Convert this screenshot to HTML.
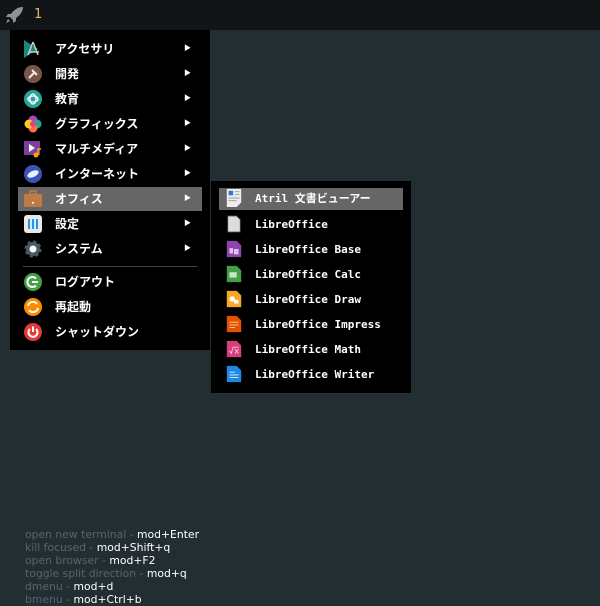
<!DOCTYPE html>
<html><head><meta charset="utf-8"><style>
*{margin:0;padding:0;box-sizing:border-box}
body{width:600px;height:600px;background:#232e33;position:relative;overflow:hidden;font-family:"Liberation Sans","Noto Sans CJK JP",sans-serif}
#bar{position:absolute;left:0;top:0;width:600px;height:30px;background:#111518}
#bar .n{position:absolute;left:34px;top:7px;color:#e8b86a;font:13px "DejaVu Sans",sans-serif}
.menu{position:absolute;background:#000}
.row{position:absolute;height:24px;color:#fff;font-weight:bold;font-size:12px;line-height:24px}
.row .ic{position:absolute;top:3px;width:18px;height:18px}
.row .t{position:absolute;white-space:nowrap}
.row .ar{position:absolute;left:166px;font-size:7px;font-weight:normal}
.sel{background:#666}
#m2 .row{font-family:"DejaVu Sans Mono","Liberation Mono","Noto Sans CJK JP",monospace;font-size:11px}
.help{position:absolute;left:25px;font:10.8px "DejaVu Sans",sans-serif;color:#56656b;white-space:nowrap}
.help b{font-weight:normal;color:#fff}
</style></head><body>
<div id="bar">
<svg style="position:absolute;left:5px;top:6px" width="20" height="18" viewBox="0 0 20 18"><path d="M18 1 C12 1 8 5 6 8 L3 8 L1 11 L5 11 L8 14 L8 17 L11 15 L11 12 C14 10 18 6 18 1Z M3 13 L1 17 L5 15Z" fill="#8a9499"/></svg>
<span class="n">1</span></div>

<div class="menu" id="m1" style="left:10px;top:30px;width:200px;height:320px">
<div class="row" style="left:8px;top:7px;width:184px"><svg class="ic" style="left:6px" viewBox="0 0 18 18"><path d="M0 0L14 9L0 18Z" fill="#1a8a78"/><path d="M9 2L4 15M9 2L14 15M5 12H15" stroke="#ccc" stroke-width="1.5" fill="none"/></svg><span class="t" style="left:37px">アクセサリ</span><span class="ar">▶</span></div>
<div class="row" style="left:8px;top:32px;width:184px"><svg class="ic" style="left:6px" viewBox="0 0 18 18"><circle cx="9" cy="9" r="9" fill="#795548"/><path d="M5 13L11 7M8 5L13 10" stroke="#eee" stroke-width="2"/></svg><span class="t" style="left:37px">開発</span><span class="ar">▶</span></div>
<div class="row" style="left:8px;top:57px;width:184px"><svg class="ic" style="left:6px" viewBox="0 0 18 18"><circle cx="9" cy="9" r="9" fill="#26a69a"/><ellipse cx="9" cy="9" rx="5" ry="3" stroke="#fff" fill="none" stroke-width="1.3"/><ellipse cx="9" cy="9" rx="3" ry="5" stroke="#fff" fill="none" stroke-width="1.3"/></svg><span class="t" style="left:37px">教育</span><span class="ar">▶</span></div>
<div class="row" style="left:8px;top:82px;width:184px"><svg class="ic" style="left:6px" viewBox="0 0 18 18"><circle cx="9" cy="5" r="4.5" fill="#ab47bc"/><circle cx="13" cy="9" r="4.5" fill="#26a69a"/><circle cx="9" cy="13" r="4.5" fill="#ff7043"/><circle cx="5" cy="9" r="4.5" fill="#ffca28"/><circle cx="9" cy="9" r="3" fill="#ec407a"/></svg><span class="t" style="left:37px">グラフィックス</span><span class="ar">▶</span></div>
<div class="row" style="left:8px;top:107px;width:184px"><svg class="ic" style="left:6px" viewBox="0 0 18 18"><rect x="0" y="1" width="16" height="14" fill="#7b3fa0"/><path d="M5 4L11 8L5 12Z" fill="#fff"/><circle cx="12" cy="15" r="2.5" fill="#ffa000"/><path d="M14 15V9h3" stroke="#ffa000" stroke-width="1.5" fill="none"/></svg><span class="t" style="left:37px">マルチメディア</span><span class="ar">▶</span></div>
<div class="row" style="left:8px;top:132px;width:184px"><svg class="ic" style="left:6px" viewBox="0 0 18 18"><circle cx="9" cy="9" r="9" fill="#3f51b5"/><ellipse cx="9" cy="9" rx="6" ry="3" fill="#e3f2fd" transform="rotate(-25 9 9)"/></svg><span class="t" style="left:37px">インターネット</span><span class="ar">▶</span></div>
<div class="row sel" style="left:8px;top:157px;width:184px"><svg class="ic" style="left:6px" viewBox="0 0 18 18"><rect x="0" y="4" width="18" height="13" rx="1" fill="#c07a45"/><rect x="6" y="1" width="6" height="3" fill="none" stroke="#c07a45" stroke-width="1.5"/><rect x="8" y="12" width="2" height="1.5" fill="#fff"/></svg><span class="t" style="left:37px">オフィス</span><span class="ar">▶</span></div>
<div class="row" style="left:8px;top:182px;width:184px"><svg class="ic" style="left:6px" viewBox="0 0 18 18"><rect width="18" height="18" rx="3" fill="#e8e8e8"/><path d="M5 4V14M9 4V14M13 4V14" stroke="#2196f3" stroke-width="2"/></svg><span class="t" style="left:37px">設定</span><span class="ar">▶</span></div>
<div class="row" style="left:8px;top:207px;width:184px"><svg class="ic" style="left:6px" viewBox="0 0 18 18"><circle cx="9" cy="9" r="7" fill="#455a64" stroke="#455a64" stroke-width="3" stroke-dasharray="3 2.5"/><circle cx="9" cy="9" r="3.5" fill="#fff"/></svg><span class="t" style="left:37px">システム</span><span class="ar">▶</span></div>
<div style="position:absolute;left:13px;top:236px;width:174px;height:1px;background:#444"></div>
<div class="row" style="left:8px;top:240px;width:184px"><svg class="ic" style="left:6px" viewBox="0 0 18 18"><circle cx="9" cy="9" r="9" fill="#43a047"/><path d="M12 5.5A5 5 0 1 0 12 12.5" stroke="#fff" stroke-width="2" fill="none"/><path d="M8 9H14" stroke="#fff" stroke-width="2"/></svg><span class="t" style="left:37px">ログアウト</span></div>
<div class="row" style="left:8px;top:265px;width:184px"><svg class="ic" style="left:6px" viewBox="0 0 18 18"><circle cx="9" cy="9" r="9" fill="#fb8c00"/><path d="M4 8A5 5 0 0 1 13 6M14 10A5 5 0 0 1 5 12" stroke="#fff" stroke-width="2" fill="none"/></svg><span class="t" style="left:37px">再起動</span></div>
<div class="row" style="left:8px;top:290px;width:184px"><svg class="ic" style="left:6px" viewBox="0 0 18 18"><circle cx="9" cy="9" r="9" fill="#e53935"/><path d="M6 6A4.5 4.5 0 1 0 12 6" stroke="#fff" stroke-width="2" fill="none"/><path d="M9 3.5V9" stroke="#fff" stroke-width="2"/></svg><span class="t" style="left:37px">シャットダウン</span></div>
</div>

<div class="menu" id="m2" style="left:211px;top:181px;width:200px;height:212px">
<div class="row sel" style="left:8px;top:7px;width:184px;height:22px;line-height:22px"><svg class="ic" style="left:6px;top:1px" viewBox="0 0 18 20"><path d="M1 0H17V15L12 20H1Z" fill="#eee"/><rect x="3" y="2" width="5" height="5" fill="#2a7ad8"/><path d="M10 3H15M10 6H15M3 10H15M3 13H12" stroke="#999"/></svg><span class="t" style="left:36px">Atril 文書ビューアー</span></div>
<div class="row" style="left:8px;top:32px;width:184px"><svg class="ic" style="left:6px;top:2px" viewBox="0 0 16 20"><path d="M1 1H11L15 5V19H1Z" fill="#ddd" stroke="#444"/></svg><span class="t" style="left:36px">LibreOffice</span></div>
<div class="row" style="left:8px;top:57px;width:184px"><svg class="ic" style="left:6px;top:2px" viewBox="0 0 16 20"><path d="M0 1H11L16 6V19H0Z" fill="#8e44ad"/><rect x="3" y="9" width="4" height="6" fill="#e0c0f0"/><rect x="8" y="10" width="5" height="6" fill="#e0c0f0"/></svg><span class="t" style="left:36px">LibreOffice Base</span></div>
<div class="row" style="left:8px;top:82px;width:184px"><svg class="ic" style="left:6px;top:2px" viewBox="0 0 16 20"><path d="M0 1H11L16 6V19H0Z" fill="#43a047"/><rect x="3" y="8" width="8" height="6" fill="#c8e6c9"/></svg><span class="t" style="left:36px">LibreOffice Calc</span></div>
<div class="row" style="left:8px;top:107px;width:184px"><svg class="ic" style="left:6px;top:2px" viewBox="0 0 16 20"><path d="M0 1H11L16 6V19H0Z" fill="#f9a825"/><circle cx="6" cy="10" r="3" fill="#fff"/><rect x="8" y="11" width="5" height="4" fill="#fff"/></svg><span class="t" style="left:36px">LibreOffice Draw</span></div>
<div class="row" style="left:8px;top:132px;width:184px"><svg class="ic" style="left:6px;top:2px" viewBox="0 0 16 20"><path d="M0 1H11L16 6V19H0Z" fill="#e65100"/><path d="M3 8H13M3 11H13M3 14H9" stroke="#ffccaa"/></svg><span class="t" style="left:36px">LibreOffice Impress</span></div>
<div class="row" style="left:8px;top:157px;width:184px"><svg class="ic" style="left:6px;top:2px" viewBox="0 0 16 20"><path d="M0 1H11L16 6V19H0Z" fill="#d63f7d"/><path d="M3 12L5 15L7 8H13M9 10L13 15M13 10L9 15" stroke="#fcd" fill="none"/></svg><span class="t" style="left:36px">LibreOffice Math</span></div>
<div class="row" style="left:8px;top:182px;width:184px"><svg class="ic" style="left:6px;top:2px" viewBox="0 0 16 20"><path d="M0 1H11L16 6V19H0Z" fill="#1e88e5"/><path d="M3 8H9M3 11H13M3 14H13" stroke="#dceeff"/></svg><span class="t" style="left:36px">LibreOffice Writer</span></div>
</div>

<div class="help" style="top:528px">open new terminal - <b>mod+Enter</b></div>
<div class="help" style="top:541px">kill focused - <b>mod+Shift+q</b></div>
<div class="help" style="top:554px">open browser - <b>mod+F2</b></div>
<div class="help" style="top:567px">toggle split direction - <b>mod+q</b></div>
<div class="help" style="top:580px">dmenu - <b>mod+d</b></div>
<div class="help" style="top:593px">bmenu - <b>mod+Ctrl+b</b></div>
</body></html>
